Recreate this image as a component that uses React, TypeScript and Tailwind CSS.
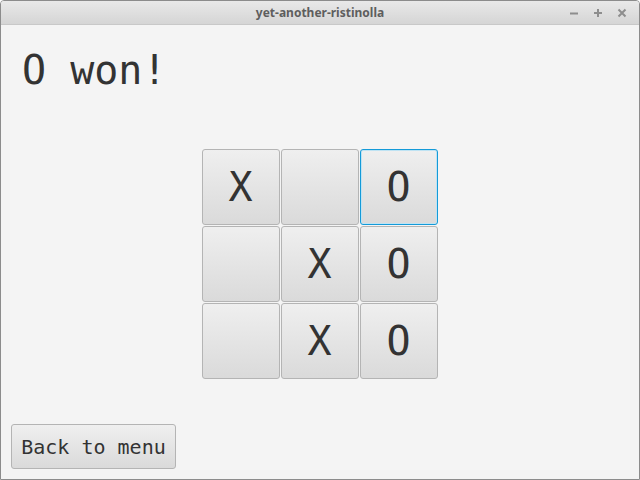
import React from "react";

const board: string[] = ["X", "", "O", "", "X", "O", "", "X", "O"];

function Cell({ value, focused }: { value: string; focused?: boolean }) {
  return (
    <button
      className={
        "w-[78px] h-[76px] rounded-[3px] border bg-gradient-to-b from-[#efefef] to-[#dadada] flex items-center justify-center text-[40px] leading-none text-[#333333] " +
        (focused ? "border-[#149ad8] shadow-[inset_0_0_0_1px_#bfe3f3]" : "border-[#b4b4b4]")
      }
      style={{ fontFamily: '"DejaVu Sans Mono", monospace' }}
    >
      {value}
    </button>
  );
}

export default function App() {
  return (
    <div className="w-[640px] h-[480px] flex flex-col bg-[#f4f4f4] border border-[#8c8c8c] rounded-t-[4px] overflow-hidden">
      {/* title bar */}
      <div className="h-[24px] shrink-0 relative flex items-center justify-center bg-gradient-to-b from-[#e9e9e9] to-[#d5d5d5] border-b border-[#c8c8c8]">
        <span
          className="text-[12px] font-bold text-[#5e5e5e]"
          style={{ fontFamily: '"Noto Sans", "Open Sans", sans-serif' }}
        >
          yet-another-ristinolla
        </span>
        <div className="absolute right-[12px] top-0 h-full flex items-center gap-[14px]">
          <svg width="10" height="10" viewBox="0 0 10 10">
            <path d="M1 5.5h8" stroke="#8e8e8e" strokeWidth="2" />
          </svg>
          <svg width="10" height="10" viewBox="0 0 10 10">
            <path d="M1 5h8M5 1v8" stroke="#8e8e8e" strokeWidth="2" />
          </svg>
          <svg width="10" height="10" viewBox="0 0 10 10">
            <path d="M1.5 1.5l7 7M8.5 1.5l-7 7" stroke="#8e8e8e" strokeWidth="2" />
          </svg>
        </div>
      </div>

      {/* content */}
      <div className="flex-1 flex flex-col px-[10px] pb-[10px]">
        <h1
          className="mt-[25px] ml-[11px] text-[40px] leading-none text-[#333333]"
          style={{ fontFamily: '"DejaVu Sans Mono", monospace' }}
        >
          O won!
        </h1>
        <div className="mt-[59px] self-center ml-[-1px] grid grid-cols-3 gap-[1px]">
          {board.map((v, i) => (
            <Cell key={i} value={v} focused={i === 2} />
          ))}
        </div>
        <div className="flex-1" />
        <button
          className="w-[165px] h-[45px] rounded-[3px] border border-[#b4b4b4] bg-gradient-to-b from-[#efefef] to-[#dadada] text-[20px] text-[#333333] flex items-center justify-center"
          style={{ fontFamily: '"DejaVu Sans Mono", monospace' }}
        >
          Back to menu
        </button>
      </div>
    </div>
  );
}
